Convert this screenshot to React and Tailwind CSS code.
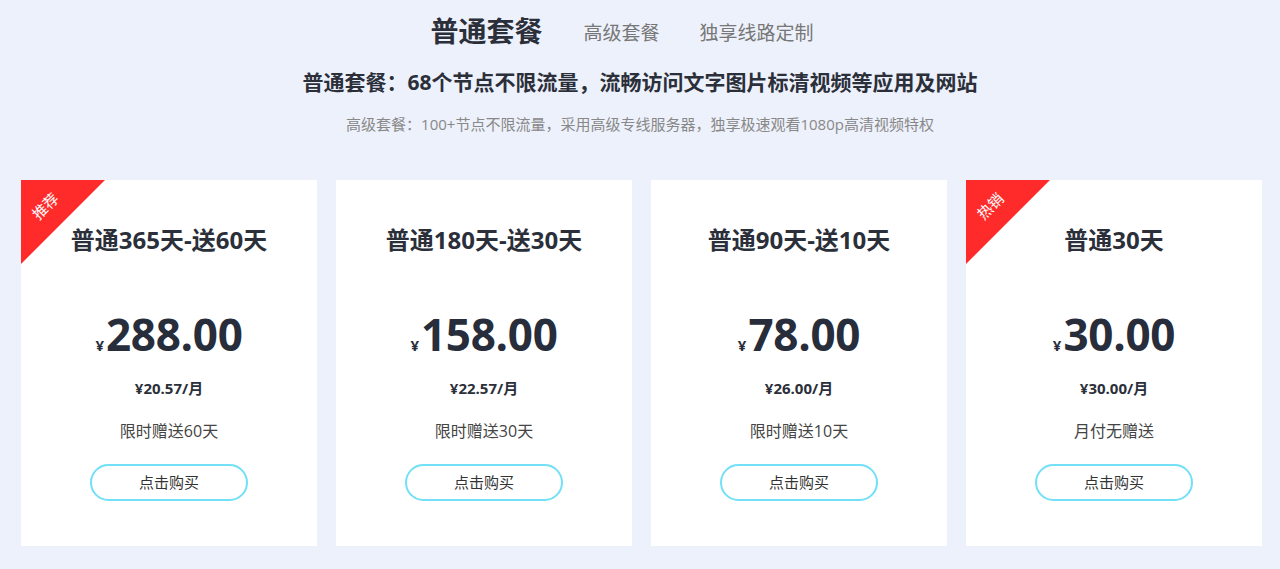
import React from 'react';

const plans = [
    { title: '普通365天-送60天', price: '288.00', month: '¥20.57/月', gift: '限时赠送60天', tag: '推荐' },
    { title: '普通180天-送30天', price: '158.00', month: '¥22.57/月', gift: '限时赠送30天' },
    { title: '普通90天-送10天', price: '78.00', month: '¥26.00/月', gift: '限时赠送10天' },
    { title: '普通30天', price: '30.00', month: '¥30.00/月', gift: '月付无赠送', tag: '热销' },
];

const cjk = { fontFamily: '"Open Sans", "Noto Sans CJK SC", sans-serif' };

const PlanCard = ({ plan }) => {
    return (
        <div className="relative overflow-hidden bg-white h-[366px] flex flex-col items-center pt-[44px]">
            {plan.tag ? (
                <>
                    <div className="absolute left-0 top-0 w-0 h-0 border-t-[84px] border-r-[84px] border-t-[#ff2b2b] border-r-transparent" />
                    <span className="absolute left-[9px] top-[17px] -rotate-45 text-white text-[15px] leading-[18px]">{plan.tag}</span>
                </>
            ) : ''}
            <div className="text-[24px] leading-[32px] font-bold text-[#2b2f3a]">{plan.title}</div>
            <div className="mt-[52px] h-[52px] flex items-baseline text-[#272d3a] leading-[52px]">
                <span className="text-[15px] leading-none font-bold mr-[2px]">¥</span>
                <span className="text-[44px] font-bold tracking-[-0.3px]">{plan.price}</span>
            </div>
            <div className="mt-[17px] text-[15px] leading-[22px] font-bold text-[#2b2f3a]">{plan.month}</div>
            <div className="mt-[20px] text-[16px] leading-[24px] text-[#444]">{plan.gift}</div>
            <button className="mt-[21px] w-[158px] h-[37px] rounded-full border-2 border-[#72e0f6] bg-white text-[15px] text-[#333] focus:outline-none">
                点击购买
            </button>
        </div>
    );
};

const App = () => {
    return (
        <div className="min-h-screen bg-[#edf1fb] pt-[13px]" style={cjk}>
            <div className="flex justify-center items-baseline pr-[36px]">
                <span className="text-[28px] leading-[36px] font-bold text-[#2b2f3a]">普通套餐</span>
                <span className="ml-[41px] text-[19px] text-[#777] relative -top-[2px]">高级套餐</span>
                <span className="ml-[40px] text-[19px] text-[#777] relative -top-[2px]">独享线路定制</span>
            </div>
            <div className="mt-[17px] text-center text-[21px] leading-[30px] font-bold text-[#2b2f3a]">
                普通套餐：68个节点不限流量，流畅访问文字图片标清视频等应用及网站
            </div>
            <div className="mt-[16px] text-center text-[15px] leading-[22px] text-[#888]">
                高级套餐：100+节点不限流量，采用高级专线服务器，独享极速观看1080p高清视频特权
            </div>
            <div className="mt-[45px] grid grid-cols-4 gap-[19px] pl-[21px] pr-[18px]">
                {plans.map((plan, index) => (
                    <PlanCard key={index} plan={plan} />
                ))}
            </div>
        </div>
    );
};

export default App;
